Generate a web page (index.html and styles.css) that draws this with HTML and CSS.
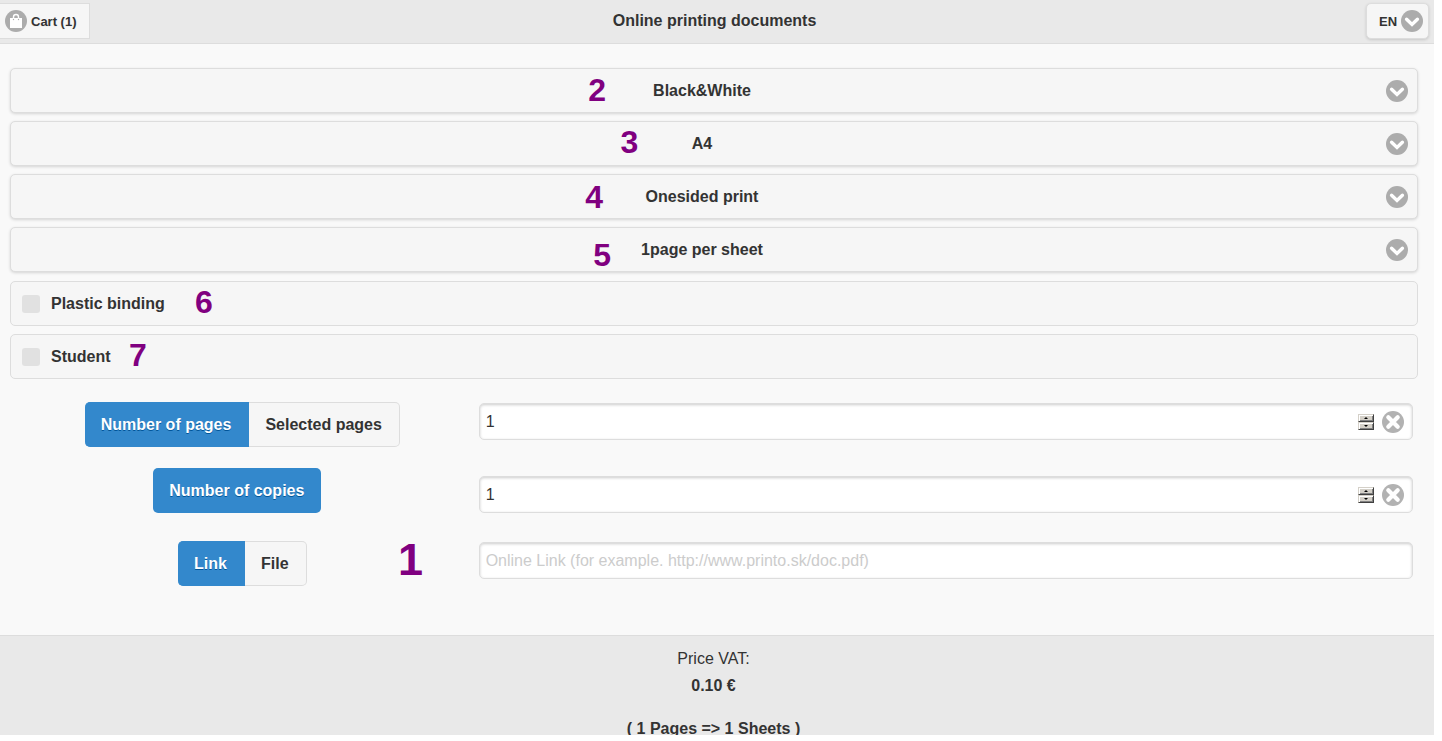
FILE: index.html
```html
<!DOCTYPE html>
<html lang="en">
<head>
    <meta charset="UTF-8">
    <meta name="viewport" content="width=device-width, initial-scale=1.0">
    <title>Online printing documents</title>
    <link rel="stylesheet" href="styles.css">
</head>
<body>
    <!-- Shared icons -->
    <svg class="icon-defs" aria-hidden="true">
        <symbol id="icon-carat" viewBox="0 0 22 22">
            <circle cx="11" cy="11" r="11" fill="#acacac"/>
            <path d="M5.6 9.2 L11 14.4 L16.4 9.2" fill="none" stroke="#fff" stroke-width="3.4" stroke-linecap="round"/>
        </symbol>
        <symbol id="icon-shop" viewBox="0 0 22 22">
            <circle cx="11" cy="11" r="11" fill="#acacac"/>
            <path d="M5 8h12v10H5z" fill="#fff"/>
            <path d="M8.5 9V7a2.5 2.5 0 0 1 5 0v2" fill="none" stroke="#fff" stroke-width="1.4"/>
            <circle cx="8.5" cy="9.5" r=".7" fill="#acacac"/>
            <circle cx="13.5" cy="9.5" r=".7" fill="#acacac"/>
        </symbol>
        <symbol id="icon-delete" viewBox="0 0 22 22">
            <circle cx="11" cy="11" r="11" fill="#b2b2b2"/>
            <path d="M6.3 6.3 L15.7 15.7 M15.7 6.3 L6.3 15.7" fill="none" stroke="#fff" stroke-width="4.2" stroke-linecap="round"/>
        </symbol>
    </svg>

    <div class="page">
        <header class="header">
            <a href="#cart" class="cart-btn">
                <svg class="icon"><use href="#icon-shop"/></svg>
                Cart (1)
            </a>
            <h1>Online printing documents</h1>
            <div class="lang">
                <select aria-label="Language">
                    <option>EN</option>
                    <option>SK</option>
                </select>
                <svg class="icon"><use href="#icon-carat"/></svg>
            </div>
        </header>

        <main class="content">
            <!-- Print options -->
            <div class="selects">
                <div class="select-row">
                    <select aria-label="Color">
                        <option>Black&amp;White</option>
                        <option>Color</option>
                    </select>
                    <svg class="icon"><use href="#icon-carat"/></svg>
                    <span class="mark mark-2">2</span>
                </div>
                <div class="select-row">
                    <select aria-label="Paper size">
                        <option>A4</option>
                        <option>A3</option>
                    </select>
                    <svg class="icon"><use href="#icon-carat"/></svg>
                    <span class="mark mark-3">3</span>
                </div>
                <div class="select-row">
                    <select aria-label="Sides">
                        <option>Onesided print</option>
                        <option>Twosided print</option>
                    </select>
                    <svg class="icon"><use href="#icon-carat"/></svg>
                    <span class="mark mark-4">4</span>
                </div>
                <div class="select-row">
                    <select aria-label="Pages per sheet">
                        <option>1page per sheet</option>
                        <option>2pages per sheet</option>
                    </select>
                    <svg class="icon"><use href="#icon-carat"/></svg>
                    <span class="mark mark-5">5</span>
                </div>
            </div>

            <div class="checks">
                <label class="check-row" for="binding">
                    <input type="checkbox" id="binding">
                    Plastic binding
                    <span class="mark mark-6">6</span>
                </label>
                <label class="check-row" for="student">
                    <input type="checkbox" id="student">
                    Student
                    <span class="mark mark-7">7</span>
                </label>
            </div>

            <!-- Pages, copies and document source -->
            <form class="order">
                <div class="order-row">
                    <div class="order-label">
                        <div class="toggle">
                            <input type="radio" name="range" id="range-all" checked>
                            <label for="range-all">Number of pages</label>
                            <input type="radio" name="range" id="range-selected">
                            <label for="range-selected">Selected pages</label>
                        </div>
                    </div>
                    <div class="field">
                        <input type="number" id="pages" value="1" min="1" aria-label="Number of pages">
                        <div class="spinner">
                            <button type="button" class="up" aria-label="More pages"></button>
                            <button type="button" class="down" aria-label="Fewer pages"></button>
                        </div>
                        <button type="button" class="clear" aria-label="Clear pages"><svg class="icon"><use href="#icon-delete"/></svg></button>
                    </div>
                </div>
                <div class="order-row">
                    <div class="order-label">
                        <button type="button" class="copies-btn">Number of copies</button>
                    </div>
                    <div class="field">
                        <input type="number" id="copies" value="1" min="1" aria-label="Number of copies">
                        <div class="spinner">
                            <button type="button" class="up" aria-label="More copies"></button>
                            <button type="button" class="down" aria-label="Fewer copies"></button>
                        </div>
                        <button type="button" class="clear" aria-label="Clear copies"><svg class="icon"><use href="#icon-delete"/></svg></button>
                    </div>
                </div>
                <div class="order-row">
                    <div class="order-label">
                        <div class="toggle">
                            <input type="radio" name="source" id="source-link" checked>
                            <label for="source-link">Link</label>
                            <input type="radio" name="source" id="source-file">
                            <label for="source-file">File</label>
                        </div>
                        <span class="mark mark-1">1</span>
                    </div>
                    <div class="field">
                        <input type="text" id="link" placeholder="Online Link (for example. http://www.printo.sk/doc.pdf)" aria-label="Online link">
                    </div>
                </div>
            </form>
        </main>

        <footer class="footer">
            <p>Price VAT:</p>
            <p><strong>0.10 €</strong></p>
            <p class="sheets"><strong>( 1 Pages =&gt; 1 Sheets )</strong></p>
        </footer>
    </div>

    <script>
        // Spinner and clear buttons of the number fields
        document.querySelectorAll('.spinner').forEach(function(spinner) {
            const input = spinner.parentElement.querySelector('input');
            spinner.querySelector('.up').addEventListener('click', () => input.stepUp());
            spinner.querySelector('.down').addEventListener('click', () => input.stepDown());
            spinner.parentElement.querySelector('.clear').addEventListener('click', () => input.value = '');
        });
    </script>
</body>
</html>
```
FILE: styles.css
```css
* {
    box-sizing: border-box;
}

body {
    margin: 0;
    background-color: #fff;
    color: #333;
    font-family: "Liberation Sans", Arial, sans-serif;
    font-size: 16px;
}

select, input, button {
    font: inherit;
    color: inherit;
    margin: 0;
}

.icon-defs {
    position: absolute;
    width: 0;
    height: 0;
}

.icon {
    display: block;
    width: 22px;
    height: 22px;
    flex: none;
    pointer-events: none;
}

.page {
    display: flex;
    flex-direction: column;
    height: calc(100vh - 6px);
    margin-right: 8px;
    overflow: hidden;
    background-color: #f9f9f9;
}

/* Header */
.header {
    display: grid;
    grid-template-columns: 1fr auto 1fr;
    align-items: center;
    flex: none;
    height: 44px;
    padding: 0 5px 1px 0;
    background-color: #e9e9e9;
    border-bottom: 1px solid #ddd;
    text-shadow: 0 1px 0 #eee;
}

.header h1 {
    margin: 0;
    font-size: 16px;
}

.cart-btn {
    display: flex;
    align-items: center;
    justify-self: start;
    gap: 4px;
    height: 36px;
    padding: 0 12px 0 5px;
    background-color: #f6f6f6;
    border: 1px solid #ddd;
    border-left: 0;
    color: #333;
    font-size: 13px;
    font-weight: bold;
    text-decoration: none;
}

.lang {
    position: relative;
    justify-self: end;
}

.lang select {
    display: block;
    width: 63px;
    height: 36px;
    padding: 0 0 0 12px;
    font-size: 13px;
}

.lang .icon {
    position: absolute;
    top: 7px;
    right: 6px;
}

.lang select, .select-row select {
    appearance: none;
    background-color: #f6f6f6;
    border: 1px solid #ddd;
    border-radius: 5px;
    box-shadow: 0 1px 3px rgba(0, 0, 0, 0.15);
    font-weight: bold;
    text-shadow: 0 1px 0 #f3f3f3;
    cursor: pointer;
}

/* Print options */
.content {
    flex: none;
    padding: 24px 16px 49px 10px;
}

.selects, .checks {
    display: flex;
    flex-direction: column;
    gap: 8px;
    margin-bottom: 9px;
}

.select-row {
    position: relative;
}

.select-row select {
    display: block;
    width: 100%;
    height: 45px;
    padding: 0 40px 0 16px;
    text-align: center;
    text-align-last: center;
}

.select-row .icon {
    position: absolute;
    top: 12px;
    right: 10px;
}

.checks {
    margin-bottom: 16px;
}

.check-row {
    display: flex;
    align-items: center;
    position: relative;
    height: 45px;
    padding-left: 11px;
    background-color: #f6f6f6;
    border: 1px solid #ddd;
    border-radius: 5px;
    font-weight: bold;
    cursor: pointer;
}

.check-row input {
    appearance: none;
    width: 18px;
    height: 18px;
    margin-right: 11px;
    background-color: #e1e1e1;
    border-radius: 3px;
}

.check-row input:checked {
    background-color: #38c;
}

/* Order form */
.order-row {
    display: grid;
    grid-template-columns: 33% 67%;
    align-items: start;
    margin-bottom: 21px;
}

.order-row:last-child {
    margin-bottom: 0;
}

.order-label {
    display: flex;
    justify-content: center;
    position: relative;
}

.toggle {
    display: flex;
    margin-top: 7px;
}

.toggle input {
    position: absolute;
    opacity: 0;
}

.toggle label, .copies-btn {
    height: 45px;
    padding: 0 17px 0 16px;
    border: 0;
    font-weight: bold;
    line-height: 45px;
    cursor: pointer;
}

.toggle label {
    background-color: #f6f6f6;
    border: 1px solid #ddd;
    border-left: 0;
    line-height: 43px;
}

.toggle label:first-of-type {
    border-radius: 5px 0 0 5px;
}

.toggle label:last-of-type {
    border-radius: 0 5px 5px 0;
}

.toggle input:checked + label, .copies-btn {
    background-color: #38c;
    border-color: #38c;
    color: #fff;
    text-shadow: 0 1px 0 #059;
}

.copies-btn {
    margin-right: 10px;
    border-radius: 5px;
}

.field {
    display: flex;
    align-items: center;
    height: 37px;
    margin: 8px 5px 0 4px;
    padding-right: 8px;
    background-color: #fff;
    border: 1px solid #ddd;
    border-radius: 5px;
    box-shadow: inset 0 1px 3px rgba(0, 0, 0, 0.2);
}

.field input {
    flex: 1;
    min-width: 0;
    height: 35px;
    padding: 0 6px;
    background: none;
    border: 0;
    appearance: textfield;
}

.field input::-webkit-inner-spin-button {
    display: none;
}

.field input::placeholder {
    color: #ccc;
}

.spinner {
    display: flex;
    flex-direction: column;
    width: 16px;
    margin-right: 8px;
}

.spinner button {
    display: flex;
    align-items: center;
    justify-content: center;
    height: 8px;
    padding: 0;
    background-color: #d4d0c8;
    border: 1px solid;
    border-color: #d4d0c8 #404040 #404040 #d4d0c8;
    box-shadow: inset 1px 1px 0 #fff, inset -1px -1px 0 #808080;
}

.spinner button::before {
    content: "";
    border: 2px solid transparent;
}

.spinner .up::before {
    border-top: 0;
    border-bottom-color: #000;
}

.spinner .down::before {
    border-bottom: 0;
    border-top-color: #000;
}

.clear {
    padding: 0;
    background: none;
    border: 0;
    cursor: pointer;
}

/* Purple step numbers over the form */
.mark {
    position: absolute;
    color: purple;
    font-size: 32px;
    font-weight: bold;
    line-height: 32px;
    pointer-events: none;
}

.mark-1 {
    top: 3px;
    left: 388px;
    font-size: 45px;
    line-height: 45px;
}

.mark-2 {
    top: 6px;
    left: calc(41% + 1px);
}

.mark-3 {
    top: 5px;
    left: calc(43% + 5px);
}

.mark-4 {
    top: 7px;
    left: calc(41% - 2px);
}

.mark-5 {
    top: 12px;
    left: calc(41% + 6px);
}

.mark-6 {
    top: 4px;
    left: 184px;
}

.mark-7 {
    top: 4px;
    left: 118px;
}

/* Price */
.footer {
    flex: 1;
    min-height: 100px;
    padding-top: 9px;
    background-color: #e9e9e9;
    border-top: 1px solid #ddd;
    text-align: center;
}

.footer p {
    margin: 0;
    padding-right: 7px;
    line-height: 27px;
}

.footer .sheets {
    margin-top: 16px;
}
```
